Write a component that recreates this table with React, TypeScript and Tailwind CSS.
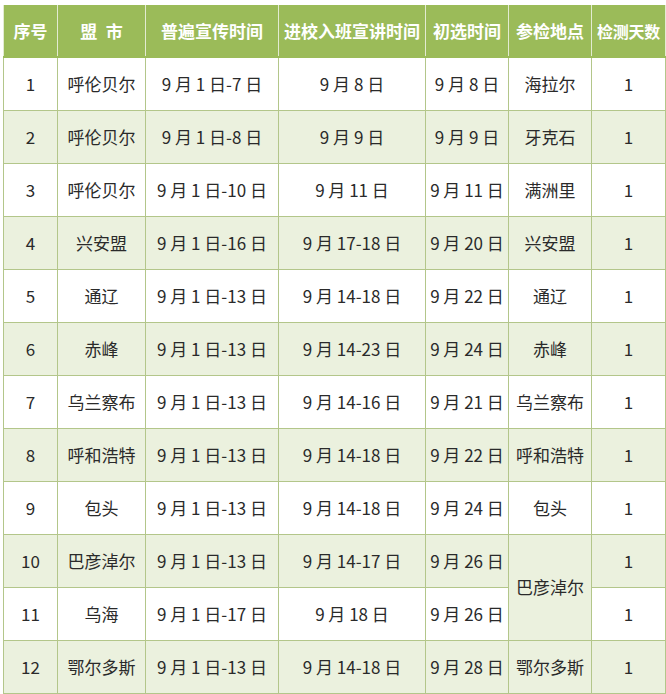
import React from "react";

type Row = {
  no: string;
  city: string;
  promo: string;
  visit: string;
  first: string;
  place?: string;
  placeSpan?: number;
  days: string;
};

const rows: Row[] = [
  { no: "1", city: "呼伦贝尔", promo: "9 月 1 日-7 日", visit: "9 月 8 日", first: "9 月 8 日", place: "海拉尔", days: "1" },
  { no: "2", city: "呼伦贝尔", promo: "9 月 1 日-8 日", visit: "9 月 9 日", first: "9 月 9 日", place: "牙克石", days: "1" },
  { no: "3", city: "呼伦贝尔", promo: "9 月 1 日-10 日", visit: "9 月 11 日", first: "9 月 11 日", place: "满洲里", days: "1" },
  { no: "4", city: "兴安盟", promo: "9 月 1 日-16 日", visit: "9 月 17-18 日", first: "9 月 20 日", place: "兴安盟", days: "1" },
  { no: "5", city: "通辽", promo: "9 月 1 日-13 日", visit: "9 月 14-18 日", first: "9 月 22 日", place: "通辽", days: "1" },
  { no: "6", city: "赤峰", promo: "9 月 1 日-13 日", visit: "9 月 14-23 日", first: "9 月 24 日", place: "赤峰", days: "1" },
  { no: "7", city: "乌兰察布", promo: "9 月 1 日-13 日", visit: "9 月 14-16 日", first: "9 月 21 日", place: "乌兰察布", days: "1" },
  { no: "8", city: "呼和浩特", promo: "9 月 1 日-13 日", visit: "9 月 14-18 日", first: "9 月 22 日", place: "呼和浩特", days: "1" },
  { no: "9", city: "包头", promo: "9 月 1 日-13 日", visit: "9 月 14-18 日", first: "9 月 24 日", place: "包头", days: "1" },
  { no: "10", city: "巴彦淖尔", promo: "9 月 1 日-13 日", visit: "9 月 14-17 日", first: "9 月 26 日", place: "巴彦淖尔", placeSpan: 2, days: "1" },
  { no: "11", city: "乌海", promo: "9 月 1 日-17 日", visit: "9 月 18 日", first: "9 月 26 日", days: "1" },
  { no: "12", city: "鄂尔多斯", promo: "9 月 1 日-13 日", visit: "9 月 14-18 日", first: "9 月 28 日", place: "鄂尔多斯", days: "1" },
];

const headers = ["序号", "盟\u2002市", "普遍宣传时间", "进校入班宣讲时间", "初选时间", "参检地点", "检测天数"];
const widths = ["w-[54px]", "w-[88px]", "w-[133px]", "w-[147px]", "w-[83px]", "w-[83px]", "w-[74px]"];

const cell = "border border-[#b3c68a] text-center align-middle p-0 whitespace-nowrap";

export default function App() {
  return (
    <div
      className="w-[666px] h-[694px] bg-white pt-[5px] pl-[3px]"
      style={{ fontFamily: '"Noto Sans CJK SC", "Noto Sans", sans-serif' }}
    >
      <table className="table-fixed border-collapse w-[662px] text-[17px] text-[#2a2a2a]">
        <colgroup>
          {widths.map((w, i) => (
            <col key={i} className={w} />
          ))}
        </colgroup>
        <thead>
          <tr className="h-[52px] bg-[#9bbb59]">
            {headers.map((h, i) => (
              <th
                key={i}
                className={`border-x border-x-[#e3ebd2] border-b-2 border-b-[#9bbb59] text-white font-bold text-center p-0 whitespace-nowrap ${
                  i === 6 ? "text-[16px] tracking-[-0.3px]" : "text-[17px]"
                }`}
              >
                {h}
              </th>
            ))}
          </tr>
        </thead>
        <tbody>
          {rows.map((r, i) => (
            <tr key={r.no} className={`h-[53px] ${i % 2 === 1 ? "bg-[#ebf1de]" : "bg-white"}`}>
              <td className={cell}>{r.no}</td>
              <td className={cell}>{r.city}</td>
              <td className={cell}>{r.promo}</td>
              <td className={cell}>{r.visit}</td>
              <td className={cell}>{r.first}</td>
              {r.place !== undefined && (
                <td className={`${cell} ${r.placeSpan ? "bg-[#ebf1de]" : ""}`} rowSpan={r.placeSpan ?? 1}>
                  {r.place}
                </td>
              )}
              <td className={cell}>{r.days}</td>
            </tr>
          ))}
        </tbody>
      </table>
    </div>
  );
}
